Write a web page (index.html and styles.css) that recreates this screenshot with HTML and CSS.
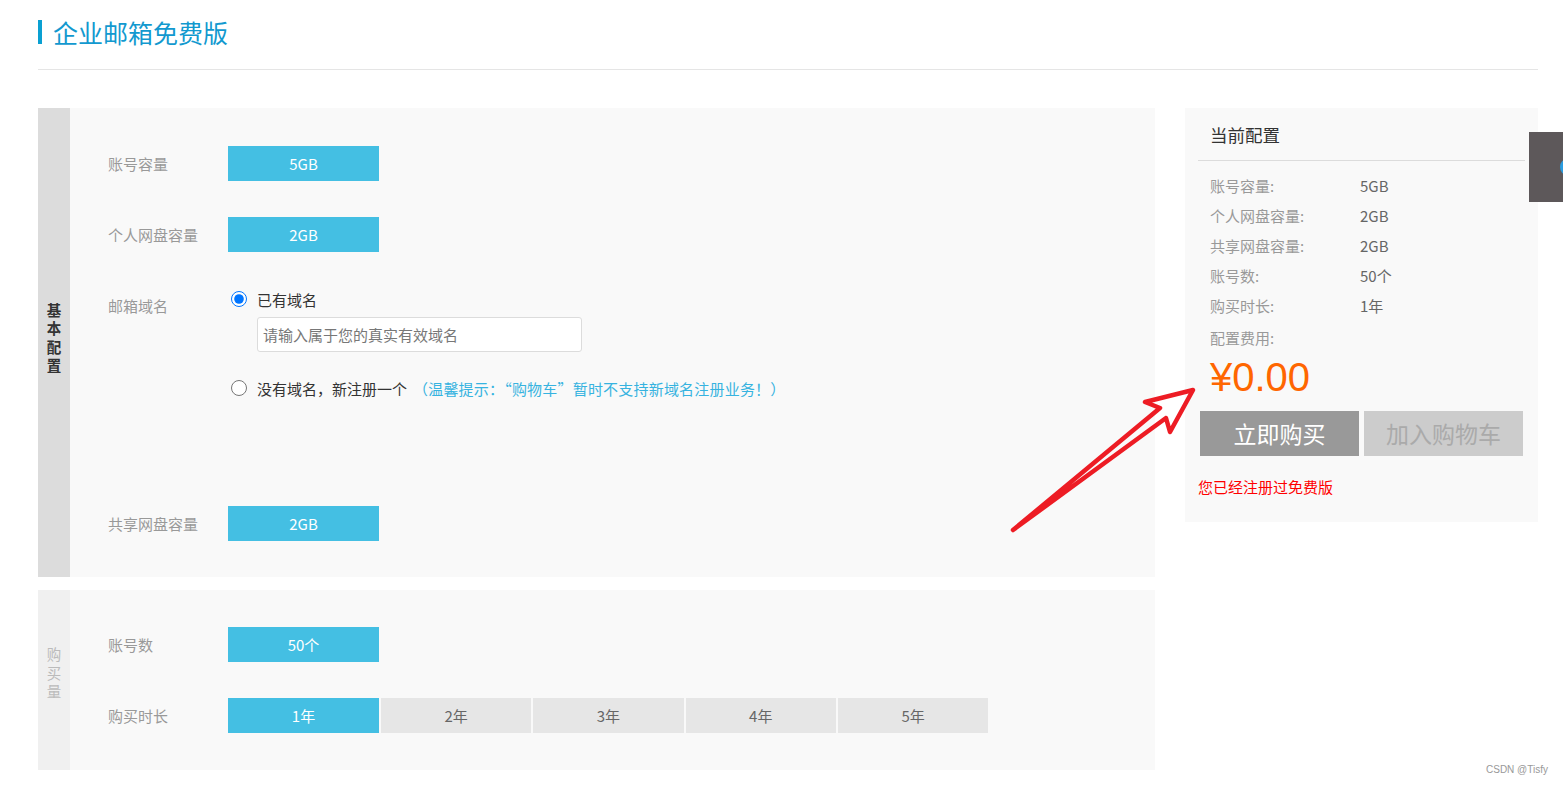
FILE: index.html
```html
<!DOCTYPE html>
<html>
<head>
  <meta charset="UTF-8">
  <title>企业邮箱免费版</title>
  <link rel="stylesheet" href="styles.css">
</head>
<body>
  <div class="page">
    <h2 class="page-title">企业邮箱免费版</h2>
    <div class="main">
      <div class="left">
        <div class="panel basic">
          <div class="side"><span>基本配置</span></div>
          <div class="content">
            <div class="row">
              <div class="label">账号容量</div>
              <div class="opts"><span class="opt on">5GB</span></div>
            </div>
            <div class="row">
              <div class="label">个人网盘容量</div>
              <div class="opts"><span class="opt on">2GB</span></div>
            </div>
            <div class="row domain">
              <div class="label">邮箱域名</div>
              <div class="domain-box">
                <label class="radio"><input type="radio" name="d" checked> 已有域名</label>
                <input class="domain-input" type="text" placeholder="请输入属于您的真实有效域名">
                <label class="radio second"><input type="radio" name="d"> 没有域名，新注册一个 <span class="tip">（温馨提示：“购物车”暂时不支持新域名注册业务！）</span></label>
              </div>
            </div>
            <div class="row">
              <div class="label">共享网盘容量</div>
              <div class="opts"><span class="opt on">2GB</span></div>
            </div>
          </div>
        </div>
        <div class="panel amount">
          <div class="side light"><span>购买量</span></div>
          <div class="content">
            <div class="row">
              <div class="label">账号数</div>
              <div class="opts"><span class="opt on">50个</span></div>
            </div>
            <div class="row">
              <div class="label">购买时长</div>
              <div class="opts">
                <span class="opt on">1年</span>
                <span class="opt">2年</span>
                <span class="opt">3年</span>
                <span class="opt">4年</span>
                <span class="opt">5年</span>
              </div>
            </div>
          </div>
        </div>
      </div>
      <div class="summary">
        <div class="sum-title">当前配置</div>
        <div class="sum-list">
          <div class="sum-row"><span class="k">账号容量:</span><span class="v">5GB</span></div>
          <div class="sum-row"><span class="k">个人网盘容量:</span><span class="v">2GB</span></div>
          <div class="sum-row"><span class="k">共享网盘容量:</span><span class="v">2GB</span></div>
          <div class="sum-row"><span class="k">账号数:</span><span class="v">50个</span></div>
          <div class="sum-row"><span class="k">购买时长:</span><span class="v">1年</span></div>
          <div class="sum-row"><span class="k">配置费用:</span></div>
        </div>
        <div class="price">¥0.00</div>
        <div class="actions">
          <span class="btn buy">立即购买</span>
          <span class="btn cart">加入购物车</span>
        </div>
        <div class="warn">您已经注册过免费版</div>
      </div>
    </div>
  </div>

  <div class="side-tab"><span class="dot"></span></div>

  <svg class="arrow" width="1563" height="785" viewBox="0 0 1563 785">
    <path d="M1013 530 L1160 408 L1145 402 L1193 390 L1170 432 L1166 418 Z" fill="none" stroke="#ed1c24" stroke-width="4.5" stroke-linejoin="round" stroke-linecap="round"/>
  </svg>

  <div class="mark">CSDN @Tisfy</div>
</body>
</html>
```

FILE: styles.css
```css
body { margin: 0; font-family: "Microsoft YaHei", "Noto Sans CJK SC", sans-serif; font-size: 15px; color: #333; background: #fff; overflow: hidden; }
.page { padding: 0 25px 0 38px; width: 1500px; }
.page-title { margin: 0; padding-top: 18px; height: 70px; box-sizing: border-box; border-bottom: 1px solid #e5e5e5; font-weight: normal; font-size: 25px; line-height: 28px; color: #1299cf; display: flex; align-items: flex-start; }
.page-title::before { content: ""; width: 4px; height: 24px; margin-top: 2px; margin-right: 11px; background: #0aa0d2; }
.main { display: flex; gap: 30px; margin-top: 38px; align-items: flex-start; }
.left { width: 1117px; display: flex; flex-direction: column; gap: 13px; }
.panel { display: flex; background: #f9f9f9; }
.side { width: 32px; background: #dcdcdc; display: flex; align-items: center; justify-content: center; padding-bottom: 10px; box-sizing: border-box; }
.side span { width: 15px; font-size: 14.5px; line-height: 18.5px; font-weight: bold; color: #333; text-align: center; word-break: break-all; }
.side.light { background: #f0f0f0; padding-bottom: 14px; }
.side.light span { font-weight: normal; color: #bbb; }
.content { flex: 1; padding: 38px 0 36px 38px; display: flex; flex-direction: column; gap: 36px; }
.amount .content { padding: 37px 0 37px 38px; }
.row { display: flex; align-items: center; height: 35px; }
.label { width: 120px; color: #999; font-size: 15px; }
.opts { display: flex; gap: 2px; }
.opt { width: 150.3px; height: 35px; line-height: 35px; text-align: center; background: #e6e6e6; color: #666; font-size: 15px; }
.opt.on { background: #44bfe3; color: #fff; }
.opt:first-child { width: 151px; }
.row.domain { height: 182px; align-items: flex-start; }
.row.domain .label { padding-top: 7px; }
.domain-box { display: flex; flex-direction: column; }
.radio { display: flex; align-items: center; height: 22px; font-size: 15px; color: #333; }
.radio input { width: 16px; height: 16px; margin: 0 10px 0 3px; accent-color: #0075ff; }
.domain-input { margin: 7px 0 0 29px; width: 325px; height: 35px; box-sizing: border-box; border: 1px solid #dcdcdc; border-radius: 3px; padding: 0 5px; font-family: inherit; font-size: 15px; color: #333; background: #fff; outline: none; }
.domain-input::placeholder { color: #777; }
.radio.second { margin-top: 25px; }
.tip { color: #36b3e0; margin-left: 6px; letter-spacing: 0.2px; }
.summary { width: 353px; height: 414px; box-sizing: border-box; background: #f9f9f9; padding: 0 13px; }
.sum-title { height: 52px; line-height: 54px; padding-left: 12px; font-size: 17.5px; color: #333; border-bottom: 1px solid #dcdcdc; }
.sum-list { padding: 10px 0 0 12px; }
.sum-row { height: 30px; line-height: 30px; display: flex; font-size: 15px; }
.sum-row:last-child { line-height: 34px; }
.sum-row .k { width: 150px; color: #999; }
.sum-row .v { color: #666; }
.price { padding-left: 12px; font-size: 40px; line-height: 50px; color: #ff6600; font-family: "Liberation Sans", sans-serif; margin-top: 1px; }
.actions { display: flex; gap: 5px; margin: 9px 0 0 2px; }
.btn { width: 159px; height: 45px; line-height: 45px; text-align: center; font-size: 23px; }
.btn.buy { background: #999; color: #fff; }
.btn.cart { background: #ccc; color: #aaa; }
.warn { margin-top: 21px; color: #f00; font-size: 15px; line-height: 20px; }
.side-tab { position: absolute; left: 1529px; top: 132px; width: 34px; height: 70px; background: #5d585a; overflow: hidden; }
.side-tab .dot { position: absolute; left: 31px; top: 27px; width: 14px; height: 16px; border-radius: 50%; background: #2a9ce0; }
.arrow { position: absolute; left: 0; top: 0; pointer-events: none; }
.mark { position: absolute; right: 15px; top: 764px; font-family: "Liberation Sans", sans-serif; font-size: 10px; color: #999; }
```
